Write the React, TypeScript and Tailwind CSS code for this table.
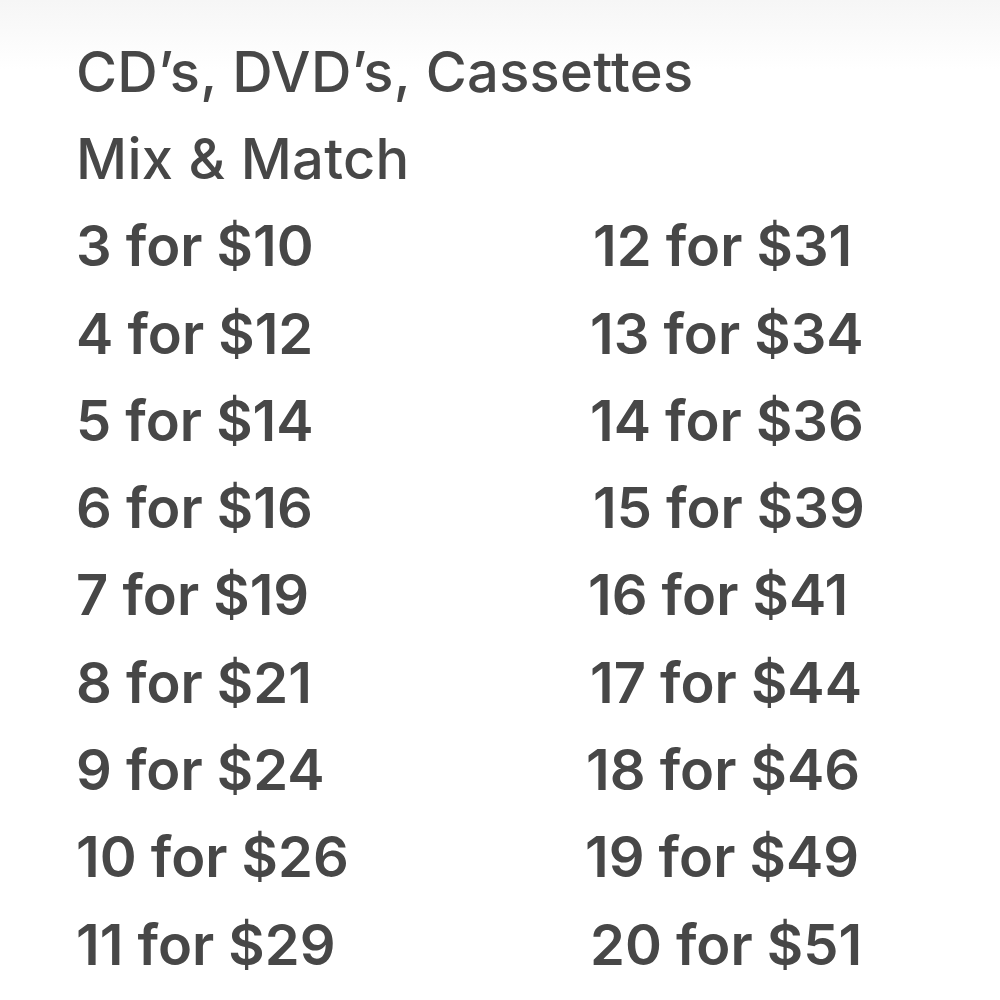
import React from "react";

const left = [
  { t: "3 for $10", c: "" },
  { t: "4 for $12", c: "" },
  { t: "5 for $14", c: "" },
  { t: "6 for $16", c: "" },
  { t: "7 for $19", c: "" },
  { t: "8 for $21", c: "" },
  { t: "9 for $24", c: "" },
  { t: "10 for $26", c: "" },
  { t: "11 for $29", c: "" },
];

const right = [
  { t: "12 for $31", c: "pl-[3px]" },
  { t: "13 for $34", c: "pl-0" },
  { t: "14 for $36", c: "pl-0" },
  { t: "15 for $39", c: "pl-[3px]" },
  { t: "16 for $41", c: "-ml-[2px]" },
  { t: "17 for $44", c: "pl-0" },
  { t: "18 for $46", c: "-ml-[4px]" },
  { t: "19 for $49", c: "-ml-[5px]" },
  { t: "20 for $51", c: "pl-0" },
];

export default function App() {
  return (
    <div
      className="relative w-[1000px] h-[1000px] overflow-hidden bg-white text-[#474747]"
      style={{ fontFamily: "Inter, 'Noto Sans', sans-serif" }}
    >
      <div className="absolute inset-x-0 top-0 h-[70px] bg-gradient-to-b from-[#f6f6f6] to-white" />
      <div className="relative flex flex-col pl-[76px] pt-[28px]">
        <div className="h-[87.3px] flex items-center text-[56px] font-medium tracking-[0.3px]">
          CD’s, DVD’s, Cassettes
        </div>
        <div className="h-[87.3px] flex items-center text-[56px] font-medium tracking-[0.3px]">
          Mix &amp; Match
        </div>
        <div className="flex">
          <div className="w-[514px] flex flex-col">
            {left.map((r) => (
              <div
                key={r.t}
                className={"h-[87.3px] flex items-center text-[56px] font-semibold " + r.c}
              >
                {r.t}
              </div>
            ))}
          </div>
          <div className="flex flex-col">
            {right.map((r) => (
              <div
                key={r.t}
                className={"h-[87.3px] flex items-center text-[56px] font-semibold " + r.c}
              >
                {r.t}
              </div>
            ))}
          </div>
        </div>
      </div>
    </div>
  );
}
